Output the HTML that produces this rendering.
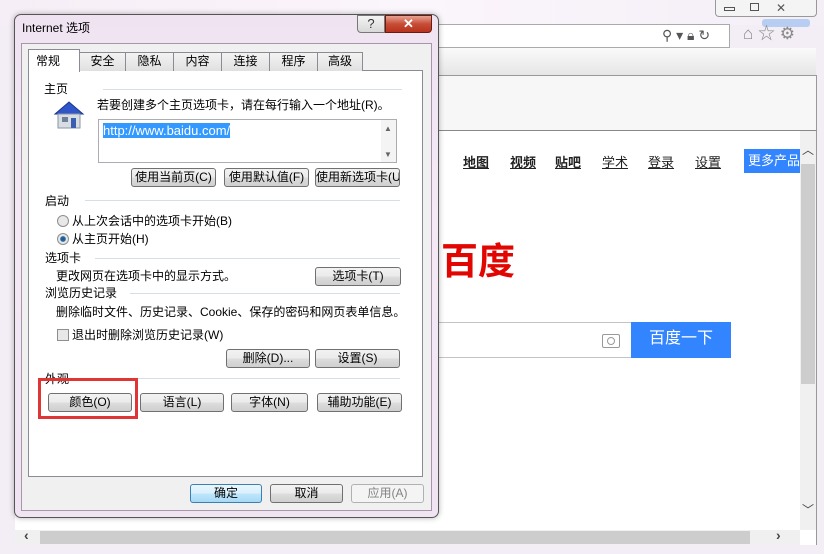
<!DOCTYPE html>
<html><head><meta charset="utf-8"><style>
*{margin:0;padding:0;box-sizing:border-box}
body{width:824px;height:554px;overflow:hidden;position:relative;background:#f3eef5;font-family:"Liberation Sans","Noto Sans CJK SC",sans-serif;font-size:12px;color:#000}
.a{position:absolute}
.btn{position:absolute;height:19px;border:1px solid #707070;border-radius:3px;background:linear-gradient(#f2f2f2 0,#ebebeb 50%,#dddddd 51%,#cfcfcf 100%);font-size:12px;line-height:17px;text-align:center;white-space:nowrap;overflow:hidden}
.lbl{position:absolute;font-size:12px;line-height:14px;white-space:nowrap}
.ln{position:absolute;height:1px;background:#d5dfe5}
.tab{position:absolute;top:52px;height:19px;border:1px solid #898c95;border-bottom:none;background:linear-gradient(#f3f3f3,#e0e0e0);font-size:12px;line-height:17px;text-align:center}
.nav{position:absolute;top:152px;font-size:13px;text-decoration:underline;color:#222;font-weight:bold}
</style></head><body>
<!-- browser background -->
<div class="a" style="left:0;top:0;width:824px;height:25px;background:linear-gradient(90deg,#f6eef6,#fbf6fb,#f4eef7)"></div>
<div class="a" style="left:715px;top:0;width:102px;height:17px;border:1px solid #999;border-top:none;border-radius:0 0 4px 4px;background:#f4f4f4"></div>
<div class="a" style="left:724px;top:7px;width:11px;height:4px;border:1px solid #555"></div>
<div class="a" style="left:750px;top:3px;width:9px;height:8px;border:1px solid #555"></div>
<div class="lbl" style="left:776px;top:1px;color:#555;font-size:12px">✕</div>
<div class="a" style="left:762px;top:19px;width:48px;height:8px;background:#a8c4f0;border-radius:3px;opacity:.8"></div>
<div class="a" style="left:15px;top:24px;width:715px;height:24px;background:#fff;border:1px solid #aaa"></div>
<div class="lbl" style="left:662px;top:28px;color:#555;font-size:14px">⚲ ▾ 🔒︎ ↻</div>
<div class="lbl" style="left:743px;top:27px;color:#888;font-size:17px">⌂ ☆ ⚙</div>
<div class="a" style="left:15px;top:48px;width:801px;height:27px;background:linear-gradient(#fafafa,#e6e6e6)"></div>
<div class="a" style="left:15px;top:75px;width:802px;height:56px;background:#f7f7f7;border-top:1px solid #999;border-bottom:1px solid #888;border-right:1px solid #999"></div>
<div class="a" style="left:15px;top:131px;width:802px;height:414px;background:#fff;border-right:1px solid #999"></div>
<div class="a" style="left:800px;top:131px;width:16px;height:399px;background:#f0f0f0"></div>
<div class="a" style="left:801px;top:164px;width:14px;height:220px;background:#cdcdcd"></div>
<div class="lbl" style="left:802px;top:143px;font-size:12px;color:#444">︿</div>
<div class="lbl" style="left:802px;top:503px;font-size:12px;color:#444">﹀</div>
<div class="a" style="left:15px;top:530px;width:785px;height:15px;background:#f0f0f0"></div>
<div class="a" style="left:40px;top:531px;width:710px;height:13px;background:#cdcdcd"></div>
<div class="lbl" style="left:24px;top:528px;font-size:14px;color:#444;font-weight:bold">‹</div>
<div class="lbl" style="left:776px;top:528px;font-size:14px;color:#444;font-weight:bold">›</div>
<!-- baidu -->
<div class="nav" style="left:463px">地图</div>
<div class="nav" style="left:510px">视频</div>
<div class="nav" style="left:555px">贴吧</div>
<div class="nav" style="left:602px;font-weight:normal">学术</div>
<div class="nav" style="left:648px;font-weight:normal">登录</div>
<div class="nav" style="left:695px;font-weight:normal">设置</div>
<div class="a" style="left:744px;top:149px;width:56px;height:24px;background:#3385ff;color:#fff;font-size:13px;line-height:24px;padding-left:4px;overflow:hidden;white-space:nowrap">更多产品</div>
<div class="lbl" style="left:441px;top:240px;font-size:37px;line-height:44px;font-weight:bold;color:#e10601">百度</div>
<div class="a" style="left:436px;top:322px;width:196px;height:36px;border:1px solid #c4c4c4;border-left:none"></div>
<div class="a" style="left:602px;top:334px;width:18px;height:14px;border:1px solid #999;border-radius:2px"></div>
<div class="a" style="left:607px;top:337px;width:8px;height:8px;border:1px solid #999;border-radius:50%"></div>
<div class="a" style="left:631px;top:322px;width:100px;height:36px;background:#3385ff;color:#fff;font-size:16px;line-height:34px;text-align:center">百度一下</div>
<!-- dialog -->
<div class="a" style="left:14px;top:14px;width:425px;height:504px;border:1px solid #555;border-radius:7px;background:linear-gradient(#efe3f2,#f4e9f5 40%,#f0e4f3);box-shadow:0 0 6px rgba(0,0,0,.3)"></div>
<div class="lbl" style="left:22px;top:21px;font-size:12px">Internet 选项</div>
<div class="a" style="left:357px;top:15px;width:28px;height:18px;border:1px solid #777;border-radius:0 0 0 4px;background:linear-gradient(#f4f4f4,#d8d8d8);text-align:center;font-size:13px;line-height:16px;color:#333">?</div>
<div class="a" style="left:385px;top:15px;width:47px;height:18px;border:1px solid #6b1a12;border-radius:0 0 4px 0;background:linear-gradient(#e8a293,#c74d37 50%,#b8321c);text-align:center;color:#fff;font-weight:bold;font-size:13px;line-height:16px">✕</div>
<div class="a" style="left:21px;top:43px;width:411px;height:468px;background:#f0f0f0;border:1px solid #a795a9"></div>
<div class="a" style="left:28px;top:70px;width:395px;height:407px;background:#fff;border:1px solid #898c95"></div>
<div class="tab" style="left:79px;width:47px">安全</div>
<div class="tab" style="left:125px;width:49px">隐私</div>
<div class="tab" style="left:173px;width:49px">内容</div>
<div class="tab" style="left:221px;width:49px">连接</div>
<div class="tab" style="left:269px;width:49px">程序</div>
<div class="tab" style="left:317px;width:46px">高级</div>
<div class="tab" style="left:28px;top:49px;width:52px;height:23px;background:#fff;text-align:left;padding-left:7px;line-height:22px">常规</div>
<div class="lbl" style="left:44px;top:82px">主页</div><div class="ln" style="left:103px;top:89px;width:299px"></div>
<svg class="a" style="left:52px;top:100px" width="33" height="30" viewBox="0 0 33 30"><path d="M3 14 L17 2 L31 14 Z" fill="#2f55c8" stroke="#1b3590"/><rect x="6" y="14" width="22" height="14" fill="#d8dde4" stroke="#8a95a5"/><rect x="10" y="17" width="6" height="5" fill="#6f7f95"/><rect x="19" y="18" width="5" height="10" fill="#3b5fb0"/></svg>
<div class="lbl" style="left:97px;top:98px">若要创建多个主页选项卡，请在每行输入一个地址(R)。</div>
<div class="a" style="left:98px;top:119px;width:299px;height:44px;border:1px solid #abadb3;background:#fff"></div>
<div class="a" style="left:381px;top:120px;width:15px;height:42px;background:#f4f4f4"></div>
<div class="lbl" style="left:384px;top:122px;font-size:8px;color:#666">▲</div><div class="lbl" style="left:384px;top:148px;font-size:8px;color:#666">▼</div>
<div class="lbl" style="left:103px;top:123px;background:#3399ff;color:#fff;font-size:13px;line-height:15px">http://www.baidu.com/</div>
<div class="btn" style="left:131px;top:168px;width:85px">使用当前页(C)</div>
<div class="btn" style="left:224px;top:168px;width:85px">使用默认值(F)</div>
<div class="btn" style="left:315px;top:168px;width:85px">使用新选项卡(U)</div>
<div class="lbl" style="left:45px;top:194px">启动</div><div class="ln" style="left:85px;top:200px;width:315px"></div>
<div class="a" style="left:57px;top:215px;width:12px;height:12px;border:1px solid #8e8f8f;border-radius:50%;background:#e8e8e8"></div>
<div class="lbl" style="left:72px;top:214px">从上次会话中的选项卡开始(B)</div>
<div class="a" style="left:57px;top:233px;width:12px;height:12px;border:1px solid #8e8f8f;border-radius:50%;background:radial-gradient(#1c5380 0,#2a6ea8 35%,#e8e8e8 45%)"></div>
<div class="lbl" style="left:72px;top:232px">从主页开始(H)</div>
<div class="lbl" style="left:45px;top:251px">选项卡</div><div class="ln" style="left:95px;top:258px;width:305px"></div>
<div class="lbl" style="left:56px;top:269px">更改网页在选项卡中的显示方式。</div>
<div class="btn" style="left:315px;top:267px;width:86px">选项卡(T)</div>
<div class="lbl" style="left:45px;top:286px">浏览历史记录</div><div class="ln" style="left:130px;top:293px;width:270px"></div>
<div class="lbl" style="left:56px;top:305px">删除临时文件、历史记录、Cookie、保存的密码和网页表单信息。</div>
<div class="a" style="left:57px;top:329px;width:12px;height:12px;border:1px solid #8e8f8f;background:#e8e8e8"></div>
<div class="lbl" style="left:72px;top:328px">退出时删除浏览历史记录(W)</div>
<div class="btn" style="left:226px;top:349px;width:84px">删除(D)...</div>
<div class="btn" style="left:315px;top:349px;width:85px">设置(S)</div>
<div class="lbl" style="left:45px;top:372px">外观</div><div class="ln" style="left:70px;top:378px;width:330px"></div>
<div class="btn" style="left:48px;top:393px;width:84px">颜色(O)</div>
<div class="btn" style="left:140px;top:393px;width:84px">语言(L)</div>
<div class="btn" style="left:231px;top:393px;width:77px">字体(N)</div>
<div class="btn" style="left:317px;top:393px;width:85px">辅助功能(E)</div>
<div class="a" style="left:38px;top:378px;width:100px;height:41px;border:3px solid #e03535"></div>
<div class="btn" style="left:190px;top:484px;width:72px;border-color:#3c7fb1;background:linear-gradient(#eaf6fd,#d9f0fc 50%,#bee6fd 51%,#a7d9f5)">确定</div>
<div class="btn" style="left:270px;top:484px;width:73px">取消</div>
<div class="btn" style="left:351px;top:484px;width:73px;border-color:#adb2b5;background:#f4f4f4;color:#838383">应用(A)</div>
</body></html>
